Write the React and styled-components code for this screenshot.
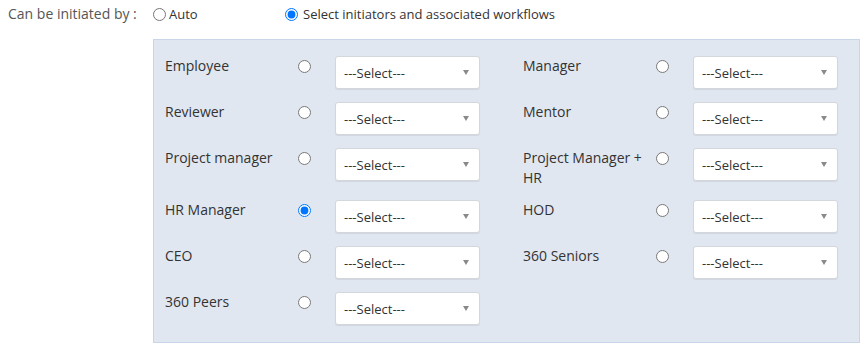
import React from "react";
import styled, { createGlobalStyle } from "styled-components";

const GlobalStyle = createGlobalStyle`
  html, body { margin: 0; padding: 0; background: #ffffff; }
  body { font-family: "Open Sans", "Noto Sans", sans-serif; }
`;

const Page = styled.div`
  padding: 4px 8px 0 8px;
  width: 868px;
  box-sizing: border-box;
`;

const FieldRow = styled.div`
  display: flex;
  align-items: flex-start;
`;

const FieldLabel = styled.div`
  width: 145px;
  flex: none;
  font-size: 14px;
  line-height: 20px;
  color: #555555;
`;

const FieldBody = styled.div`
  display: flex;
  flex-direction: column;
  gap: 15px;
`;

const ModeChoices = styled.div`
  display: flex;
  align-items: center;
  height: 20px;
`;

const ModeOption = styled.label`
  display: flex;
  align-items: center;
  gap: ${(p) => p.$gap}px;
  width: ${(p) => (p.$width ? `${p.$width}px` : "auto")};
  font-size: 13px;
  line-height: 20px;
  color: #333333;
`;

const Radio = styled.input.attrs({ type: "radio" })`
  width: 13px;
  height: 13px;
  margin: 0;
  flex: none;
`;

const Panel = styled.div`
  width: 707px;
  box-sizing: border-box;
  background: #e1e7f0;
  border: 1px solid #c9d6ea;
  padding: 16px 20px 16px 11px;
  display: grid;
  grid-template-columns: 315px 315px;
  column-gap: 43px;
  row-gap: 12px;
`;

const Initiator = styled.div`
  display: flex;
  align-items: flex-start;
  min-height: 34px;
`;

const InitiatorName = styled.div`
  width: 125px;
  padding-right: 8px;
  flex: none;
  font-size: 14px;
  line-height: 20px;
  color: #333333;
`;

const RadioSlot = styled.div`
  height: 20px;
  display: flex;
  align-items: center;
  margin-right: 24px;
  flex: none;
`;

const Select = styled.div`
  width: 145px;
  height: 33px;
  box-sizing: border-box;
  background: #ffffff;
  border: 1px solid #d3d6db;
  border-radius: 3px;
  box-shadow: 0 1px 1px rgba(0, 0, 0, 0.07);
  display: flex;
  align-items: center;
  justify-content: space-between;
  padding: 0 10px 0 8px;
  font-size: 13px;
  line-height: 18px;
  color: #333333;
  flex: none;
`;

const Caret = styled.span`
  width: 0;
  height: 0;
  border-left: 3px solid transparent;
  border-right: 3px solid transparent;
  border-top: 5px solid #8a8a8a;
`;

const initiators = [
  { name: "Employee" },
  { name: "Manager" },
  { name: "Reviewer" },
  { name: "Mentor" },
  { name: "Project manager" },
  { name: "Project Manager + HR" },
  { name: "HR Manager", checked: true },
  { name: "HOD" },
  { name: "CEO" },
  { name: "360 Seniors" },
  { name: "360 Peers" },
];

export default function App() {
  return (
    <>
      <GlobalStyle />
      <Page>
        <FieldRow>
          <FieldLabel>Can be initiated by :</FieldLabel>
          <FieldBody>
            <ModeChoices>
              <ModeOption $width={132} $gap={3}>
                <Radio name="mode" />
                Auto
              </ModeOption>
              <ModeOption $gap={5}>
                <Radio name="mode" defaultChecked />
                Select initiators and associated workflows
              </ModeOption>
            </ModeChoices>
            <Panel>
              {initiators.map((it) => (
                <Initiator key={it.name}>
                  <InitiatorName>{it.name}</InitiatorName>
                  <RadioSlot>
                    <Radio name={`init-${it.name}`} defaultChecked={!!it.checked} />
                  </RadioSlot>
                  <Select>
                    <span>---Select---</span>
                    <Caret />
                  </Select>
                </Initiator>
              ))}
            </Panel>
          </FieldBody>
        </FieldRow>
      </Page>
    </>
  );
}
